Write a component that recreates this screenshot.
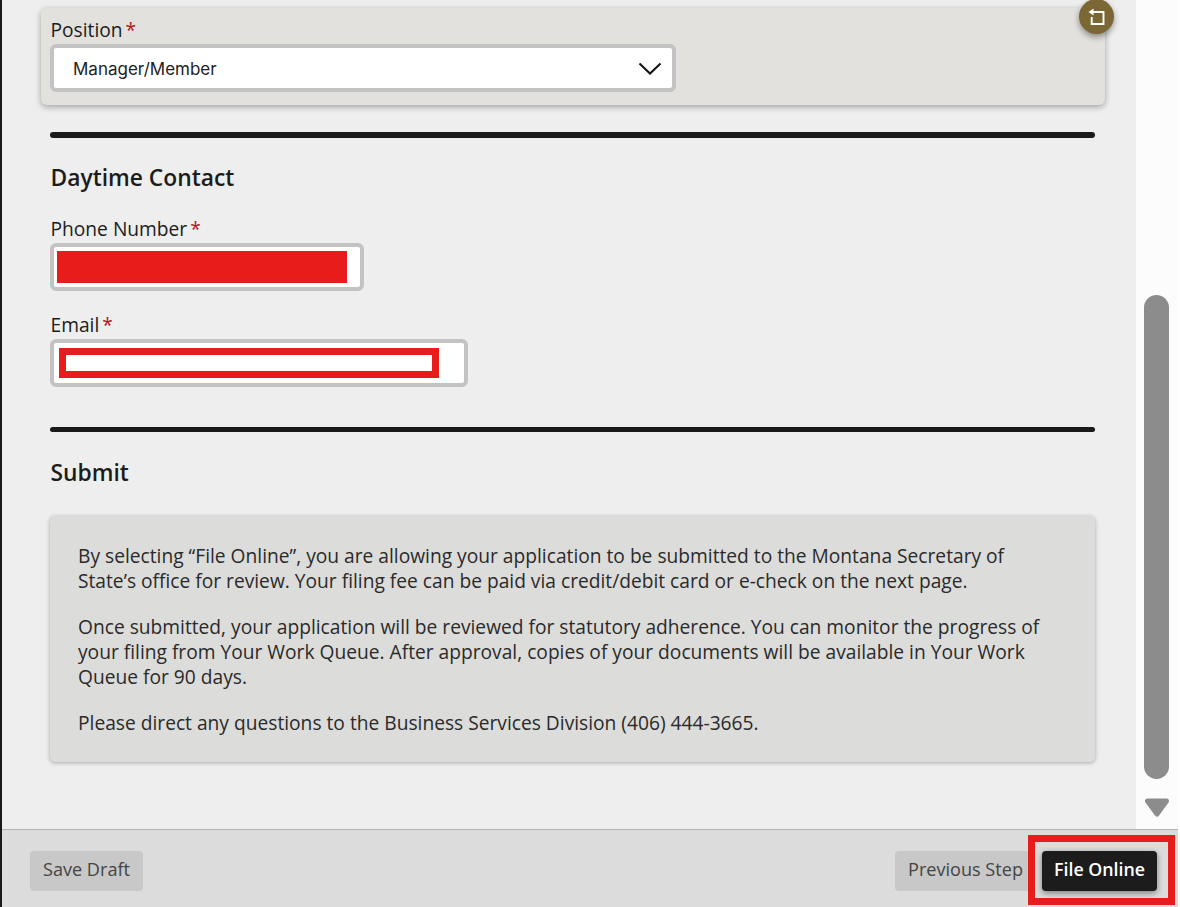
<div class="app">
  <div class="body">
    <main class="content">
      <section class="panel">
        <button class="reset" aria-label="Reset">
          <svg width="20" height="20" viewBox="0 0 20 20" fill="none" stroke="#fff" stroke-width="1.9">
            <path d="M6 5H16.5V17H4.7V10" />
            <path d="M1.5 5L6.5 1.5V8.5Z" fill="#fff" stroke="none" />
          </svg>
        </button>
        <div class="label">Position<span class="req">*</span></div>
        <div class="select">
          <span>Manager/Member</span>
          <svg width="24" height="14" viewBox="0 0 24 14" fill="none" stroke="#111" stroke-width="2">
            <path d="M1.5 1.5L12 11.5L22.5 1.5" />
          </svg>
        </div>
      </section>
      <hr class="rule first" />
      <h2>Daytime Contact</h2>
      <div class="label phone-label">Phone Number<span class="req">*</span></div>
      <div class="input phone"><div class="redact-solid"></div></div>
      <div class="label email-label">Email<span class="req">*</span></div>
      <div class="input email"><div class="redact-outline"></div></div>
      <hr class="rule second" />
      <h2 class="submit">Submit</h2>
      <div class="info">
        <p>By selecting “File Online”, you are allowing your application to be submitted to the Montana Secretary of State’s office for review. Your filing fee can be paid via credit/debit card or e-check on the next page.</p>
        <p>Once submitted, your application will be reviewed for statutory adherence. You can monitor the progress of your filing from Your Work Queue. After approval, copies of your documents will be available in Your Work Queue for 90 days.</p>
        <p>Please direct any questions to the Business Services Division (406) 444-3665.</p>
      </div>
    </main>
    <aside class="scroll">
      <div class="thumb"></div>
      <svg class="arrow" width="26" height="19" viewBox="0 0 26 19"><path d="M3.5 3H22.5L13 16Z" fill="#8c8c8c" stroke="#8c8c8c" stroke-width="5" stroke-linejoin="round"/></svg>
    </aside>
  </div>
  <footer>
    <button class="btn">Save Draft</button>
    <div class="right">
      <button class="btn prev">Previous Step</button>
      <button class="btn primary">File Online</button>
      <div class="callout"></div>
    </div>
  </footer>
</div>

<style>
  :global(body) { margin: 0; background: #fff; }
  .app {
    width: 1178px; height: 907px; box-sizing: border-box;
    border-left: 2px solid #1a1a1a;
    display: flex; flex-direction: column; overflow: hidden;
    font-family: "Open Sans", sans-serif; color: #1c1c1c;
  }
  .body { height: 829px; display: flex; }
  .content { flex: 1; background: #eeeeee; padding: 8px 41px 0 39px; box-sizing: border-box; min-width: 0; }
  .scroll { width: 42px; background: #fcfcfc; display: flex; flex-direction: column; align-items: flex-start; padding: 295px 0 0 8px; box-sizing: border-box; }
  .thumb { width: 25px; height: 484px; border-radius: 13px; background: #8c8c8c; }
  .arrow { margin-top: 19px; }
  .panel {
    position: relative; height: 97px; box-sizing: border-box; margin-right: -10px;
    background: #e2e1dd; border-radius: 6px; padding: 9px 9px 0 9.5px;
    box-shadow: 0 2px 6px rgba(0,0,0,.32);
  }
  .reset {
    position: absolute; right: -9px; top: -9px; width: 35px; height: 35px; border: 0; padding: 0;
    border-radius: 50%; background: #7a6733; display: flex; align-items: center; justify-content: center;
    box-shadow: 0 3px 6px rgba(0,0,0,.4);
  }
  .label { font-size: 19.2px; line-height: 26px; height: 27px; }
  .req { color: #b3151b; margin-left: 3px; }
  .select {
    width: 626px; height: 48px; box-sizing: border-box; border: 4px solid #c3c3c3; border-radius: 6px; background: #fff;
    display: flex; align-items: center; justify-content: space-between; padding: 1px 10px 0 19px;
    margin-left: -0.5px;
    font-family: "Inter", sans-serif; font-size: 17px; color: #222;
  }
  .rule { border: 0; height: 5.5px; background: #1a1a1a; border-radius: 3px; margin: 0 0 0 9px; width: 1045px; }
  .first { margin-top: 27px; }
  h2 { font-size: 22.8px; line-height: 30px; font-weight: 600; margin: 25px 0 0 9.5px; color: #1c1c1c; }
  .phone-label { margin: 23px 0 0 9.5px; height: 27px; }
  .email-label { margin: 21px 0 0 9.5px; height: 27px; }
  .input { height: 48px; box-sizing: border-box; margin-left: 9px; border: 4px solid #c3c3c3; border-radius: 6px; background: #fff; display: flex; align-items: center; }
  .phone { width: 314px; padding-left: 3px; }
  .email { width: 418px; padding-left: 5px; }
  .redact-solid { width: 290px; height: 32px; background: #e91c1c; }
  .redact-outline { width: 380px; height: 30px; box-sizing: border-box; border: 7px solid #e91c1c; background: #fff; }
  .second { margin-top: 40px; }
  .submit { margin-top: 26px; }
  .info {
    margin: 28px 0 0 9px; width: 1045px; height: 246px; box-sizing: border-box;
    background: #dcdcda; border-radius: 5px; padding: 27px 28px 0;
    box-shadow: 0 1px 4px rgba(0,0,0,.3); font-size: 19.22px; line-height: 25px; color: #2a2a2a;
  }
  .info p { margin: 0 0 21px; }
  footer {
    height: 78px; box-sizing: border-box; border-top: 1px solid #b4b4b4; background: #dcdcdc;
    display: flex; justify-content: space-between; align-items: flex-start; padding: 21px 21px 0 28px;
  }
  .right { display: flex; position: relative; gap: 12px; }
  .btn {
    height: 40px; border: 0; border-radius: 4px; background: #c8c8c8; color: #444;
    font-family: "Open Sans", sans-serif; font-size: 18.1px; font-weight: 400; padding: 0 13px 5px;
  }
  .prev { width: 135px; padding: 0 0 5px 13px; text-align: left; }
  .primary { background: #1c1c1c; color: #fff; font-weight: 600; font-size: 17.8px; width: 115px; padding: 0 0 4px; box-shadow: 0 2px 6px rgba(0,0,0,.45); }
  .callout { position: absolute; right: -18px; top: -16px; width: 147px; height: 70px; box-sizing: border-box; border: 7px solid #e91c1c; pointer-events: none; }
</style>
